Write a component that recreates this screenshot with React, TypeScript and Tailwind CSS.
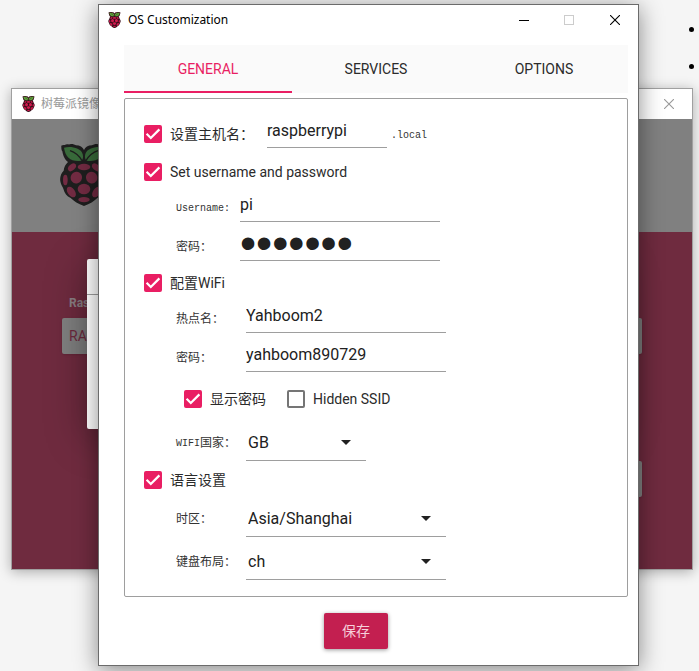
import { ReactNode, useState } from "react";

const sans = "font-['Roboto','Noto_Sans_CJK_SC',sans-serif]";
const song = "font-['Liberation_Mono','Noto_Sans_CJK_SC',monospace]";

const Raspberry = ({ className, berry, leaf, body }: { className: string; berry: string; leaf: string; body: string }) => (
  <svg viewBox="0 0 144 186" className={className} aria-hidden="true">
    <path
      d="M4 8 C2 2 10 4 14 3 C20 -1 24 2 30 1 C38 -1 42 2 48 4 C60 4 68 10 72 18 C76 10 84 4 96 4 C102 2 106 -1 114 1 C120 2 124 -1 130 3 C134 4 142 2 140 8 C140 14 140 18 137 22 C134 38 130 46 120 54 C128 62 132 70 133 80 C142 88 146 104 142 116 C140 124 136 128 134 134 C130 148 124 156 112 162 C102 172 90 180 72 186 C54 180 42 172 32 162 C20 156 14 148 10 134 C8 128 4 124 2 116 C-2 104 2 88 11 80 C12 70 16 62 24 54 C14 46 10 38 7 22 C4 18 4 14 4 8 Z"
      fill={body}
    />
    <path d="M12 11 C34 6 62 12 68 30 C71 40 68 48 64 50 C34 54 17 42 12 11 Z" fill={leaf} />
    <path d="M132 11 C110 6 82 12 76 30 C73 40 76 48 80 50 C110 54 127 42 132 11 Z" fill={leaf} />
    <path d="M30 20 C46 25 56 33 66 50 M114 20 C98 25 88 33 78 50" fill="none" stroke={body} strokeWidth="4" />
    <g fill={berry}>
      <ellipse cx="72" cy="69" rx="19" ry="10" />
      <ellipse cx="36" cy="70" rx="14" ry="9" transform="rotate(-42 36 70)" />
      <ellipse cx="108" cy="70" rx="14" ry="9" transform="rotate(42 108 70)" />
      <ellipse cx="49" cy="101" rx="17" ry="18" transform="rotate(30 49 101)" />
      <ellipse cx="95" cy="101" rx="17" ry="18" transform="rotate(-30 95 101)" />
      <ellipse cx="72" cy="135" rx="19" ry="16" />
      <ellipse cx="16" cy="108" rx="7" ry="16" />
      <ellipse cx="128" cy="108" rx="7" ry="16" />
      <ellipse cx="34" cy="144" rx="11" ry="18" transform="rotate(-35 34 144)" />
      <ellipse cx="110" cy="144" rx="11" ry="18" transform="rotate(35 110 144)" />
      <ellipse cx="72" cy="167" rx="17" ry="8" />
    </g>
  </svg>
);

const CloseIcon = () => (
  <svg viewBox="0 0 10 10" className="size-2.5" fill="none" stroke="currentColor" aria-hidden="true">
    <path d="M0 0 L10 10 M10 0 L0 10" strokeWidth="1.1" />
  </svg>
);

const Checkbox = ({ label, checked = false }: { label: string; checked?: boolean }) => (
  <label className="flex h-6 items-center gap-2 text-sm text-[#2b2b2b]">
    <span className="grid size-[18px]">
      <input
        type="checkbox"
        defaultChecked={checked}
        className="peer col-start-1 row-start-1 size-[18px] appearance-none rounded-xs border-2 border-[#757575] checked:border-[#e91e63] checked:bg-[#e91e63]"
      />
      <svg
        viewBox="0 0 18 18"
        className="pointer-events-none invisible col-start-1 row-start-1 size-[18px] peer-checked:visible"
        fill="none"
        stroke="white"
        strokeWidth="2.2"
        aria-hidden="true"
      >
        <path d="M2.6 8.8 L6.8 13 L15.4 4.4" />
      </svg>
    </span>
    {label}
  </label>
);

const FieldLabel = ({ id, wide = false, children }: { id: string; wide?: boolean; children: ReactNode }) => (
  <label
    htmlFor={id}
    className={`${song} ${wide ? "w-[70px]" : "w-16"} flex h-7 shrink-0 items-center pt-0.5 text-xs whitespace-nowrap text-[#333]`}
  >
    {children}
  </label>
);

const TextField = ({ id, value }: { id: string; value: string }) => (
  <input
    id={id}
    type="text"
    defaultValue={value}
    className="h-8 w-[200px] border-b border-[#9e9e9e] pb-0.5 text-base text-[#212121] outline-none"
  />
);

const SelectField = ({ id, value, short = false }: { id: string; value: string; short?: boolean }) => (
  <div className={`${short ? "w-[120px]" : "w-[200px]"} grid items-center border-b border-[#9e9e9e]`}>
    <select
      id={id}
      defaultValue={value}
      className="col-start-1 row-start-1 h-[35px] w-full appearance-none bg-transparent pl-0.5 text-base text-[#212121] outline-none"
    >
      <option>{value}</option>
    </select>
    <svg
      viewBox="0 0 10 5"
      className="pointer-events-none col-start-1 row-start-1 mr-[15px] h-[5px] w-2.5 justify-self-end"
      aria-hidden="true"
    >
      <path d="M0 0 H10 L5 5 Z" fill="#212121" />
    </svg>
  </div>
);

const ImagerWindow = () => (
  <section className="absolute top-[88px] right-1.5 left-[11px] border border-[#a0a0a0] bg-white shadow-[0_2px_12px_rgba(0,0,0,0.3)]">
    <header className="flex h-[30px] items-center pl-2.5 text-[#999]">
      <Raspberry className="h-4 w-[13px]" berry="#d01a4e" leaf="#5ba43b" body="#3a0c1a" />
      <h2 className="ml-1.5 text-xs">树莓派镜像</h2>
      <button type="button" aria-label="Close" className="ml-auto flex h-[30px] w-[46px] items-center justify-center">
        <CloseIcon />
      </button>
    </header>
    <div className="h-[113px] bg-[#808080] pt-[25px] pl-12">
      <Raspberry className="h-[62px] w-12" berry="#722b42" leaf="#386a3a" body="#1e1e1e" />
    </div>
    <div className="bg-[#6f2b3f] px-[50px] pt-[62px] pb-[72px]">
      <p className="h-[18px] pl-[7px] text-xs leading-[18px] font-bold text-[#8b8185]">Ras</p>
      <div className="mt-1.5 flex justify-between">
        <button type="button" className="h-9 w-36 rounded-xs bg-[#808080] pl-[7px] text-left text-sm text-[#6f2b3f] shadow">
          RA
        </button>
        <button type="button" aria-label="Storage" className="h-9 w-36 rounded-xs bg-[#808080] shadow" />
      </div>
      <div className="mt-[107px] flex justify-end">
        <button type="button" aria-label="Next" className="h-9 w-36 rounded-xs bg-[#808080] shadow" />
      </div>
    </div>
    {/* popup behind the settings dialog */}
    <div className="absolute top-[170px] right-[75px] left-[75px] h-[170px] rounded-xs bg-white shadow-[0_8px_40px_rgba(0,0,0,0.35)]">
      <div className="h-9 border-b border-[#9e9e9e]" />
    </div>
  </section>
);

const tabs = ["GENERAL", "SERVICES", "OPTIONS"];

const CustomizationWindow = () => {
  const [tab, setTab] = useState("GENERAL");

  return (
    <section className="absolute top-1 right-[60px] left-[98px] border border-[#6b6b6b] bg-white shadow-[0_4px_22px_rgba(0,0,0,0.45)]">
      <header className="flex h-[30px] items-center pl-[9px]">
        <Raspberry className="h-4 w-[13px]" berry="#d01a4e" leaf="#5ba43b" body="#3a0c1a" />
        <h1 className="ml-[7px] font-['Noto_Sans',sans-serif] text-xs text-black">OS Customization</h1>
        <div className="ml-auto flex h-full text-black">
          <button type="button" aria-label="Minimize" className="flex w-11 items-center justify-center">
            <span className="h-px w-2.5 bg-black" />
          </button>
          <button type="button" aria-label="Maximize" disabled className="flex w-[46px] items-center justify-center">
            <span className="size-2.5 border border-[#ccc]" />
          </button>
          <button type="button" aria-label="Close" className="flex w-[46px] items-center justify-center">
            <CloseIcon />
          </button>
        </div>
      </header>

      <div className="pt-2.5 pr-2.5 pb-4 pl-[25px]">
        <div role="tablist" className="grid h-12 grid-cols-3 bg-[#fafafa]">
          {tabs.map((name) => (
            <button
              key={name}
              type="button"
              role="tab"
              aria-selected={tab === name}
              onClick={() => setTab(name)}
              className={`border-y-2 border-t-transparent text-sm ${
                tab === name ? "border-b-[#e91e63] text-[#e91e63]" : "border-b-transparent text-[#2b2b2b]"
              }`}
            >
              {name}
            </button>
          ))}
        </div>

        <form className="mt-[5px] rounded-xs border border-[#9e9e9e] pt-[17px] pb-4 pl-[19px]">
          <div className="flex items-end">
            <div className="flex h-7 w-[123px] items-center whitespace-nowrap">
              <Checkbox label="设置主机名：" checked />
            </div>
            <input
              aria-label="设置主机名"
              type="text"
              defaultValue="raspberrypi"
              className="h-8 w-[120px] border-b border-[#9e9e9e] pb-0.5 text-base text-[#212121] outline-none"
            />
            <span className={`${song} ml-1 flex h-7 items-center pt-0.5 text-[10px] text-[#333]`}>.local</span>
          </div>

          <div className="mt-3">
            <Checkbox label="Set username and password" checked />
            <div className="mt-1.5 flex flex-col gap-[7px] pl-8">
              <div className="flex items-end">
                <FieldLabel id="username">
                  <span className="text-[10px]">Username:</span>
                </FieldLabel>
                <TextField id="username" value="pi" />
              </div>
              <div className="flex items-end">
                <FieldLabel id="user-password">密码：</FieldLabel>
                <input
                  id="user-password"
                  type="password"
                  defaultValue="example"
                  className="h-8 w-[200px] border-b border-[#9e9e9e] pb-1 font-['Liberation_Sans',sans-serif] text-[46px] leading-none text-[#212121] outline-none"
                />
              </div>
            </div>
          </div>

          <div className="mt-2.5">
            <Checkbox label="配置WiFi" checked />
            <div className="mt-1.5 flex flex-col gap-[7px] pl-8">
              <div className="flex items-end">
                <FieldLabel id="ssid" wide>热点名：</FieldLabel>
                <TextField id="ssid" value="Yahboom2" />
              </div>
              <div className="flex items-end">
                <FieldLabel id="wifi-password" wide>密码：</FieldLabel>
                <TextField id="wifi-password" value="yahboom890729" />
              </div>
              <div className="mt-2 mb-[7px] flex gap-[21px] pl-2">
                <Checkbox label="显示密码" checked />
                <Checkbox label="Hidden SSID" />
              </div>
              <div className="flex items-center">
                <FieldLabel id="country" wide>
                  <span className="text-[10px]">WIFI</span>国家：
                </FieldLabel>
                <SelectField id="country" value="GB" short />
              </div>
            </div>
          </div>

          <div className="mt-[7px]">
            <Checkbox label="语言设置" checked />
            <div className="mt-[9px] flex flex-col gap-[7px] pl-8">
              <div className="flex items-center">
                <FieldLabel id="timezone" wide>时区：</FieldLabel>
                <SelectField id="timezone" value="Asia/Shanghai" />
              </div>
              <div className="flex items-center">
                <FieldLabel id="keyboard" wide>键盘布局：</FieldLabel>
                <SelectField id="keyboard" value="ch" />
              </div>
            </div>
          </div>
        </form>

        <div className="mt-4 flex justify-center pr-10">
          <button
            type="button"
            className="h-9 w-16 rounded-xs bg-[#c31f50] text-sm text-[#f6cfdb] shadow-[0_1px_4px_rgba(0,0,0,0.4)]"
          >
            保存
          </button>
        </div>
      </div>
    </section>
  );
};

const App = () => (
  <main className={`${sans} relative min-h-screen overflow-hidden bg-[#f5f5f5]`}>
    <ul className="flex flex-col items-end gap-8 pt-[27px] pr-[5px]">
      <li className="size-[5px] rounded-full bg-black" />
      <li className="size-[5px] rounded-full bg-black" />
    </ul>
    <ImagerWindow />
    <CustomizationWindow />
  </main>
);

export default App;
